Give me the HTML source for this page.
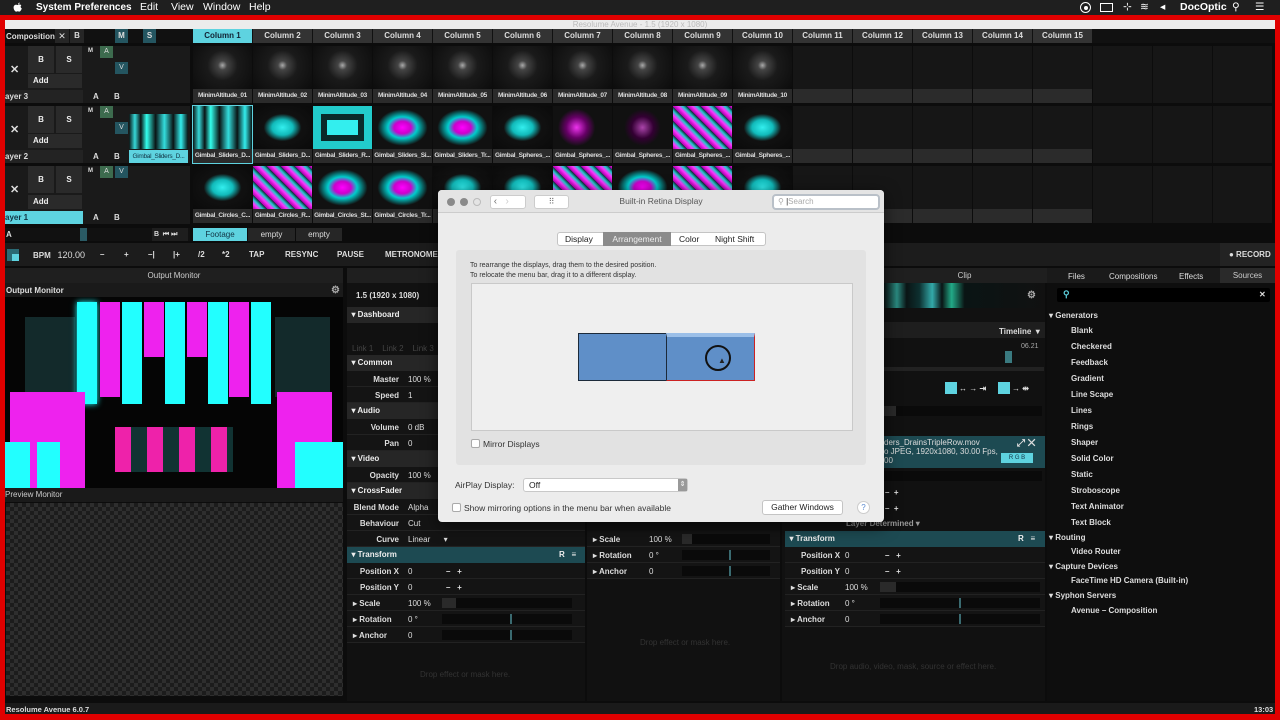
<!DOCTYPE html>
<html><head><meta charset="utf-8"><style>
*{margin:0;padding:0;box-sizing:border-box}
body{width:1280px;height:720px;overflow:hidden;background:#e00000;font-family:"Liberation Sans",sans-serif;position:relative}
.a{position:absolute}
.t{position:absolute;font-size:8px;color:#ddd;white-space:nowrap;font-weight:bold}
.cell{position:absolute;width:59px;height:57px;background:#161616}
.cell .im{position:absolute;left:0;top:0;width:59px;height:43px}
.cell .lb{position:absolute;left:0;top:43px;width:59px;height:14px;background:#2b2b2b;color:#ddd;font-size:6.5px;letter-spacing:-0.3px;line-height:14px;text-align:center;white-space:nowrap;overflow:hidden;font-weight:bold}
.col{position:absolute;top:29px;width:59px;height:14px;background:#333;color:#ddd;font-size:8px;line-height:14px;text-align:center;font-weight:bold}
.g{background:radial-gradient(circle at 50% 45%,#aaa 0,#444 12%,#1a1a1a 40%,#0c0c0c 100%)}
.c1{background:linear-gradient(90deg,#0a1414,#36d8d8 10%,#0a1414 20%,#3fe 30%,#0a1414 45%,#3dd 60%,#0a1414 75%,#3ee 88%,#0a1414)}
.c2{background:radial-gradient(ellipse at 50% 50%,#f0f 0,#c0c 20%,#0cc 35%,#111 60%)}
.c3{background:radial-gradient(ellipse at 50% 50%,#3ee 0,#1bb 25%,#111 45%,#0a0a0a)}
.c4{background:repeating-linear-gradient(45deg,#a0a 0,#f3f 4px,#2cc 7px,#123 10px)}
.pr{position:absolute;height:16px;background:#141414;border-bottom:1px solid #222}
.hd{position:absolute;height:16px;background:#262626;color:#eee;font-size:8px;font-weight:bold;line-height:16px}
</style></head><body>
<!-- menubar -->
<div class="a" style="left:0;top:0;width:1280px;height:15px;background:#1f1f1f;color:#fff;font-size:10.5px;line-height:15px" >
<svg class="a" style="left:13px;top:2px" width="10" height="11" viewBox="0 0 10 11"><path d="M5 3C6 2.2 7.5 2.3 8.4 3.3 7.3 4 7.4 5.8 8.8 6.4 8.3 7.9 7.4 9.6 6.4 9.6 5.7 9.6 5.5 9.2 4.8 9.2 4 9.2 3.8 9.6 3.1 9.6 2 9.6.5 7.3.6 5.2.7 3.5 2 2.6 3.1 2.7 3.9 2.7 4.4 3.1 5 3ZM5.1 2.5C5 1.6 5.7.6 6.6.5 6.7 1.4 6 2.5 5.1 2.5Z" fill="#fff"/></svg>
<span class="a" style="left:36px;font-weight:bold;font-size:10px">System Preferences</span>
<span class="a" style="left:140px">Edit</span><span class="a" style="left:171px">View</span><span class="a" style="left:203px">Window</span><span class="a" style="left:249px">Help</span>
<span class="a" style="left:1080px;top:2px;width:11px;height:11px;border:1.5px solid #fff;border-radius:50%"></span>
<span class="a" style="left:1084px;top:6px;width:4px;height:4px;background:#fff;border-radius:50%"></span>
<span class="a" style="left:1100px;top:3px;width:13px;height:9px;border:1.5px solid #fff"></span>
<span class="a" style="left:1123px">⊹</span><span class="a" style="left:1140px">≋</span><span class="a" style="left:1160px">◂</span>
<span class="a" style="left:1180px;font-weight:bold">DocOptic</span>
<span class="a" style="left:1232px">⚲</span><span class="a" style="left:1255px">☰</span>
</div>
<!-- app area -->
<div class="a" style="left:5px;top:20px;width:1270px;height:694px;background:#0c0c0c"></div>
<div class="a" style="left:5px;top:20px;width:1270px;height:9px;background:#ececec;color:#bbb;font-size:8px;line-height:9px;text-align:center">Resolume Avenue - 1.5 (1920 x 1080)</div>
<div class="a" style="left:5px;top:29px;width:1270px;height:14px;background:#111"></div>
<div class="t" style="left:6px;top:32px">Composition</div>
<div class="a" style="left:55px;top:29px;width:14px;height:14px;background:#262626;color:#ddd;font-size:9px;text-align:center;line-height:14px">✕</div>
<div class="a" style="left:70px;top:29px;width:14px;height:14px;background:#262626;color:#ddd;font-size:8px;text-align:center;line-height:14px;font-weight:bold">B</div>
<div class="a" style="left:115px;top:29px;width:13px;height:14px;background:#245560;color:#ddd;font-size:8px;text-align:center;line-height:14px;font-weight:bold">M</div>
<div class="a" style="left:143px;top:29px;width:13px;height:14px;background:#245560;color:#ddd;font-size:8px;text-align:center;line-height:14px;font-weight:bold">S</div>
<div class="col" style="left:193px;background:#5ed3e0;color:#123">Column 1</div>
<div class="col" style="left:253px">Column 2</div><div class="col" style="left:313px">Column 3</div><div class="col" style="left:373px">Column 4</div><div class="col" style="left:433px">Column 5</div><div class="col" style="left:493px">Column 6</div><div class="col" style="left:553px">Column 7</div><div class="col" style="left:613px">Column 8</div><div class="col" style="left:673px">Column 9</div><div class="col" style="left:733px">Column 10</div><div class="col" style="left:793px">Column 11</div><div class="col" style="left:853px">Column 12</div><div class="col" style="left:913px">Column 13</div><div class="col" style="left:973px">Column 14</div><div class="col" style="left:1033px">Column 15</div>

<!-- layer controls -->
<div class="a" style="left:5px;top:46px;width:185px;height:57px;background:#1a1a1a"></div>
<div class="a" style="left:5px;top:106px;width:185px;height:57px;background:#1a1a1a"></div>
<div class="a" style="left:5px;top:166px;width:185px;height:58px;background:#1a1a1a"></div>
<div class="t" style="left:10px;top:63px;font-size:11px">✕</div>
<div class="a" style="left:28px;top:46px;width:26px;height:27px;background:#2a2a2a;color:#eee;font-size:8px;text-align:center;line-height:27px;font-weight:bold">B</div>
<div class="a" style="left:56px;top:46px;width:26px;height:27px;background:#2a2a2a;color:#eee;font-size:8px;text-align:center;line-height:27px;font-weight:bold">S</div>
<div class="a" style="left:28px;top:74px;width:54px;height:14px;background:#2a2a2a;color:#eee;font-size:8px;line-height:14px;padding-left:5px;font-weight:bold">Add</div>
<div class="a" style="left:100px;top:46px;width:13px;height:12px;background:#3d6b4e;color:#ddd;font-size:7px;text-align:center;line-height:12px">A</div>
<div class="a" style="left:115px;top:62px;width:13px;height:12px;background:#245560;color:#ddd;font-size:7px;text-align:center;line-height:12px">V</div>
<div class="t" style="left:88px;top:48px;font-size:6px">M</div>
<div class="a" style="left:5px;top:90px;width:78px;height:13px;background:#232323;color:#ddd;font-size:8px;line-height:13px;font-weight:bold">ayer 3</div>
<div class="t" style="left:93px;top:92px">A</div><div class="t" style="left:114px;top:92px">B</div>
<div class="t" style="left:10px;top:123px;font-size:11px">✕</div>
<div class="a" style="left:28px;top:106px;width:26px;height:27px;background:#2a2a2a;color:#eee;font-size:8px;text-align:center;line-height:27px;font-weight:bold">B</div>
<div class="a" style="left:56px;top:106px;width:26px;height:27px;background:#2a2a2a;color:#eee;font-size:8px;text-align:center;line-height:27px;font-weight:bold">S</div>
<div class="a" style="left:28px;top:134px;width:54px;height:14px;background:#2a2a2a;color:#eee;font-size:8px;line-height:14px;padding-left:5px;font-weight:bold">Add</div>
<div class="a" style="left:100px;top:106px;width:13px;height:12px;background:#3d6b4e;color:#ddd;font-size:7px;text-align:center;line-height:12px">A</div>
<div class="a" style="left:115px;top:122px;width:13px;height:12px;background:#245560;color:#ddd;font-size:7px;text-align:center;line-height:12px">V</div>
<div class="t" style="left:88px;top:108px;font-size:6px">M</div>
<div class="a" style="left:5px;top:150px;width:78px;height:13px;background:#232323;color:#ddd;font-size:8px;line-height:13px;font-weight:bold">ayer 2</div>
<div class="t" style="left:93px;top:152px">A</div><div class="t" style="left:114px;top:152px">B</div>
<div class="a c1" style="left:129px;top:114px;width:59px;height:35px"></div>
<div class="a" style="left:129px;top:150px;width:59px;height:13px;background:#5ed3e0;color:#134;font-size:6.5px;letter-spacing:-0.3px;line-height:13px;text-align:center;white-space:nowrap;overflow:hidden">Gimbal_Sliders_D...</div>
<div class="t" style="left:10px;top:183px;font-size:11px">✕</div>
<div class="a" style="left:28px;top:166px;width:26px;height:27px;background:#2a2a2a;color:#eee;font-size:8px;text-align:center;line-height:27px;font-weight:bold">B</div>
<div class="a" style="left:56px;top:166px;width:26px;height:27px;background:#2a2a2a;color:#eee;font-size:8px;text-align:center;line-height:27px;font-weight:bold">S</div>
<div class="a" style="left:28px;top:195px;width:54px;height:14px;background:#2a2a2a;color:#eee;font-size:8px;line-height:14px;padding-left:5px;font-weight:bold">Add</div>
<div class="a" style="left:100px;top:166px;width:13px;height:12px;background:#3d6b4e;color:#ddd;font-size:7px;text-align:center;line-height:12px">A</div>
<div class="a" style="left:115px;top:166px;width:13px;height:12px;background:#245560;color:#ddd;font-size:7px;text-align:center;line-height:12px">V</div>
<div class="t" style="left:88px;top:168px;font-size:6px">M</div>
<div class="a" style="left:5px;top:211px;width:78px;height:13px;background:#5ed3e0;color:#134;font-size:8px;line-height:13px;font-weight:bold">ayer 1</div>
<div class="t" style="left:93px;top:213px">A</div><div class="t" style="left:114px;top:213px">B</div>

<!-- clips row 3 -->
<div class="cell" style="left:193px;top:46px"><div class="im g"></div><div class="lb">MinimAltitude_01</div></div>
<div class="cell" style="left:253px;top:46px"><div class="im g"></div><div class="lb">MinimAltitude_02</div></div>
<div class="cell" style="left:313px;top:46px"><div class="im g"></div><div class="lb">MinimAltitude_03</div></div>
<div class="cell" style="left:373px;top:46px"><div class="im g"></div><div class="lb">MinimAltitude_04</div></div>
<div class="cell" style="left:433px;top:46px"><div class="im g"></div><div class="lb">MinimAltitude_05</div></div>
<div class="cell" style="left:493px;top:46px"><div class="im g"></div><div class="lb">MinimAltitude_06</div></div>
<div class="cell" style="left:553px;top:46px"><div class="im g"></div><div class="lb">MinimAltitude_07</div></div>
<div class="cell" style="left:613px;top:46px"><div class="im g"></div><div class="lb">MinimAltitude_08</div></div>
<div class="cell" style="left:673px;top:46px"><div class="im g"></div><div class="lb">MinimAltitude_09</div></div>
<div class="cell" style="left:733px;top:46px"><div class="im g"></div><div class="lb">MinimAltitude_10</div></div>
<div class="cell" style="left:793px;top:46px"><div class="lb"></div></div><div class="cell" style="left:853px;top:46px"><div class="lb"></div></div><div class="cell" style="left:913px;top:46px"><div class="lb"></div></div><div class="cell" style="left:973px;top:46px"><div class="lb"></div></div><div class="cell" style="left:1033px;top:46px"><div class="lb"></div></div>
<div class="cell" style="left:1093px;top:46px"></div><div class="cell" style="left:1153px;top:46px"></div><div class="cell" style="left:1213px;top:46px"></div>
<!-- row 2 -->
<div class="cell" style="left:193px;top:106px;outline:1px solid #5ed3e0"><div class="im c1"></div><div class="lb">Gimbal_Sliders_D...</div></div>
<div class="cell" style="left:253px;top:106px"><div class="im c3"></div><div class="lb">Gimbal_Sliders_D...</div></div>
<div class="cell" style="left:313px;top:106px"><div class="im" style="background:#3ee;border:8px solid #2cc;box-shadow:inset 0 0 0 6px #0a2a2a"></div><div class="lb">Gimbal_Sliders_R...</div></div>
<div class="cell" style="left:373px;top:106px"><div class="im c2"></div><div class="lb">Gimbal_Sliders_Si...</div></div>
<div class="cell" style="left:433px;top:106px"><div class="im c2"></div><div class="lb">Gimbal_Sliders_Tr...</div></div>
<div class="cell" style="left:493px;top:106px"><div class="im c3"></div><div class="lb">Gimbal_Spheres_...</div></div>
<div class="cell" style="left:553px;top:106px"><div class="im" style="background:radial-gradient(circle at 40% 50%,#e3e 0,#606 25%,#111 45%)"></div><div class="lb">Gimbal_Spheres_...</div></div>
<div class="cell" style="left:613px;top:106px"><div class="im" style="background:radial-gradient(circle at 50% 50%,#a4a 0,#303 30%,#111 50%)"></div><div class="lb">Gimbal_Spheres_...</div></div>
<div class="cell" style="left:673px;top:106px"><div class="im c4"></div><div class="lb">Gimbal_Spheres_...</div></div>
<div class="cell" style="left:733px;top:106px"><div class="im c3"></div><div class="lb">Gimbal_Spheres_...</div></div>
<div class="cell" style="left:793px;top:106px"><div class="lb"></div></div><div class="cell" style="left:853px;top:106px"><div class="lb"></div></div><div class="cell" style="left:913px;top:106px"><div class="lb"></div></div><div class="cell" style="left:973px;top:106px"><div class="lb"></div></div><div class="cell" style="left:1033px;top:106px"><div class="lb"></div></div>
<div class="cell" style="left:1093px;top:106px"></div><div class="cell" style="left:1153px;top:106px"></div><div class="cell" style="left:1213px;top:106px"></div>
<!-- row 1 -->
<div class="cell" style="left:193px;top:166px"><div class="im c3"></div><div class="lb">Gimbal_Circles_C...</div></div>
<div class="cell" style="left:253px;top:166px"><div class="im c4"></div><div class="lb">Gimbal_Circles_R...</div></div>
<div class="cell" style="left:313px;top:166px"><div class="im c2"></div><div class="lb">Gimbal_Circles_St...</div></div>
<div class="cell" style="left:373px;top:166px"><div class="im c2"></div><div class="lb">Gimbal_Circles_Tr...</div></div>
<div class="cell" style="left:433px;top:166px"><div class="im c3"></div><div class="lb"></div></div>
<div class="cell" style="left:493px;top:166px"><div class="im c3"></div><div class="lb"></div></div>
<div class="cell" style="left:553px;top:166px"><div class="im c4"></div><div class="lb"></div></div>
<div class="cell" style="left:613px;top:166px"><div class="im c2"></div><div class="lb"></div></div>
<div class="cell" style="left:673px;top:166px"><div class="im c4"></div><div class="lb"></div></div>
<div class="cell" style="left:733px;top:166px"><div class="im c3"></div><div class="lb"></div></div>
<div class="cell" style="left:793px;top:166px"><div class="lb"></div></div><div class="cell" style="left:853px;top:166px"><div class="lb"></div></div><div class="cell" style="left:913px;top:166px"><div class="lb"></div></div><div class="cell" style="left:973px;top:166px"><div class="lb"></div></div><div class="cell" style="left:1033px;top:166px"><div class="lb"></div></div>
<div class="cell" style="left:1093px;top:166px"></div><div class="cell" style="left:1153px;top:166px"></div><div class="cell" style="left:1213px;top:166px"></div>

<!-- deck row -->
<div class="a" style="left:5px;top:228px;width:185px;height:13px;background:#111"></div>
<div class="t" style="left:6px;top:230px">A</div>
<div class="a" style="left:80px;top:228px;width:7px;height:13px;background:#2a5a64"></div>
<div class="a" style="left:152px;top:228px;width:36px;height:13px;background:#1e1e1e;color:#ddd;font-size:7px;line-height:13px;font-weight:bold">&nbsp;B &nbsp;⏮ ⏭</div>
<div class="a" style="left:193px;top:228px;width:54px;height:13px;background:#5ed3e0;color:#134;font-size:8px;text-align:center;line-height:13px">Footage</div>
<div class="a" style="left:248px;top:228px;width:47px;height:13px;background:#262626;color:#ddd;font-size:8px;text-align:center;line-height:13px">empty</div>
<div class="a" style="left:296px;top:228px;width:46px;height:13px;background:#262626;color:#ddd;font-size:8px;text-align:center;line-height:13px">empty</div>
<!-- bpm bar -->
<div class="a" style="left:5px;top:243px;width:1270px;height:23px;background:#1c1c1c"></div>
<div class="a" style="left:7px;top:249px;width:12px;height:12px;background:#2a6a74"></div><div class="a" style="left:12px;top:254px;width:7px;height:7px;background:#5ed3e0"></div>
<div class="t" style="left:33px;top:250px">BPM &nbsp;&nbsp;<span style="font-weight:normal;font-size:9px">120.00</span></div>
<div class="t" style="left:100px;top:250px">–</div><div class="t" style="left:124px;top:250px">+</div><div class="t" style="left:148px;top:250px">–|</div><div class="t" style="left:173px;top:250px">|+</div><div class="t" style="left:198px;top:250px">/2</div><div class="t" style="left:222px;top:250px">*2</div><div class="t" style="left:249px;top:250px">TAP</div><div class="t" style="left:285px;top:250px">RESYNC</div><div class="t" style="left:337px;top:250px">PAUSE</div><div class="t" style="left:385px;top:250px">METRONOME</div>
<div class="a" style="left:1220px;top:243px;width:55px;height:23px;background:#232323"></div>
<div class="t" style="left:1229px;top:250px">● RECORD</div>

<!-- panel headers -->
<div class="a" style="left:5px;top:268px;width:338px;height:15px;background:#1f1f1f;color:#ccc;font-size:8px;text-align:center;line-height:15px">Output Monitor</div>
<div class="a" style="left:347px;top:268px;width:700px;height:15px;background:#1f1f1f"></div>
<div class="a" style="left:884px;top:268px;width:161px;height:15px;background:#1f1f1f;color:#ccc;font-size:8px;text-align:center;line-height:15px">Clip</div>
<div class="a" style="left:1047px;top:268px;width:228px;height:15px;background:#1a1a1a"></div>
<div class="t" style="left:1068px;top:272px;font-weight:normal">Files</div><div class="t" style="left:1109px;top:272px;font-weight:normal">Compositions</div><div class="t" style="left:1179px;top:272px;font-weight:normal">Effects</div>
<div class="a" style="left:1220px;top:268px;width:55px;height:15px;background:#2a2a2a;color:#ccc;font-size:8px;line-height:15px;text-align:center">Sources</div>

<!-- output monitor -->
<div class="a" style="left:5px;top:283px;width:338px;height:14px;background:#1a1a1a"></div>
<div class="t" style="left:6px;top:286px">Output Monitor</div><div class="t" style="left:331px;top:285px;color:#aaa;font-size:10px">⚙</div>
<div class="a" style="left:5px;top:297px;width:338px;height:191px;background:#050505;overflow:hidden">
 <div class="a" style="left:20px;top:20px;width:50px;height:80px;background:#1a3a3c;opacity:.7"></div>
 <div class="a" style="left:270px;top:20px;width:55px;height:80px;background:#1a3a3c;opacity:.7"></div>
 <div class="a" style="left:72px;top:5px;width:20px;height:102px;background:#2ff;box-shadow:0 0 6px #2ff"></div>
 <div class="a" style="left:95px;top:5px;width:20px;height:95px;background:#e2e"></div>
 <div class="a" style="left:117px;top:5px;width:20px;height:102px;background:#2ff"></div>
 <div class="a" style="left:139px;top:5px;width:20px;height:55px;background:#e2e"></div>
 <div class="a" style="left:160px;top:5px;width:20px;height:102px;background:#2ff"></div>
 <div class="a" style="left:182px;top:5px;width:20px;height:55px;background:#e2e"></div>
 <div class="a" style="left:203px;top:5px;width:20px;height:102px;background:#2ff"></div>
 <div class="a" style="left:224px;top:5px;width:20px;height:95px;background:#e2e"></div>
 <div class="a" style="left:246px;top:5px;width:20px;height:102px;background:#2ff"></div>
 <div class="a" style="left:5px;top:95px;width:50px;height:100px;background:#e2e"></div>
 <div class="a" style="left:0;top:145px;width:25px;height:50px;background:#2ff"></div>
 <div class="a" style="left:32px;top:145px;width:28px;height:50px;background:#2ff"></div>
 <div class="a" style="left:55px;top:95px;width:25px;height:100px;background:#e2e"></div>
 <div class="a" style="left:272px;top:95px;width:55px;height:100px;background:#e2e"></div>
 <div class="a" style="left:290px;top:145px;width:48px;height:50px;background:#2ff"></div>
 <div class="a" style="left:110px;top:130px;width:118px;height:45px;background:repeating-linear-gradient(90deg,#e2a 0 16px,#133 16px 32px)"></div>
</div>
<div class="a" style="left:5px;top:488px;width:338px;height:14px;background:#1a1a1a;color:#ccc;font-size:8px;line-height:14px">Preview Monitor</div>
<div class="a" style="left:6px;top:503px;width:337px;height:193px;background-color:#1c1c1c;background-image:linear-gradient(45deg,#2e2e2e 25%,transparent 25%,transparent 75%,#2e2e2e 75%),linear-gradient(45deg,#2e2e2e 25%,transparent 25%,transparent 75%,#2e2e2e 75%);background-size:8px 8px;background-position:0 0,4px 4px"></div>
<div class="a" style="left:5px;top:703px;width:1270px;height:11px;background:#1a1a1a"></div>
<div class="t" style="left:6px;top:705px;font-size:7.5px">Resolume Avenue 6.0.7</div><div class="t" style="left:1254px;top:705px;font-size:7.5px">13:03</div>

<!-- middle panel -->
<div class="a" style="left:347px;top:283px;width:238px;height:418px;background:#111"></div>
<div class="t" style="left:356px;top:291px">1.5 (1920 x 1080)</div>
<div class="hd" style="left:347px;top:307px;width:238px">&nbsp;&nbsp;▾ Dashboard</div>
<div class="t" style="left:352px;top:344px;color:#444;font-weight:normal">Link 1 &nbsp;&nbsp;&nbsp;Link 2 &nbsp;&nbsp;&nbsp;Link 3</div>
<div class="hd" style="left:347px;top:355px;width:238px">&nbsp;&nbsp;▾ Common</div>
<div class="pr" style="left:347px;top:371px;width:238px"><span class="t" style="right:186px;top:4px">Master</span><span class="t" style="left:61px;top:4px;font-weight:normal">100 %</span></div>
<div class="pr" style="left:347px;top:387px;width:238px"><span class="t" style="right:186px;top:4px">Speed</span><span class="t" style="left:61px;top:4px;font-weight:normal">1</span></div>
<div class="hd" style="left:347px;top:403px;width:238px">&nbsp;&nbsp;▾ Audio</div>
<div class="pr" style="left:347px;top:419px;width:238px"><span class="t" style="right:186px;top:4px">Volume</span><span class="t" style="left:61px;top:4px;font-weight:normal">0 dB</span></div>
<div class="pr" style="left:347px;top:435px;width:238px"><span class="t" style="right:186px;top:4px">Pan</span><span class="t" style="left:61px;top:4px;font-weight:normal">0</span></div>
<div class="hd" style="left:347px;top:451px;width:238px">&nbsp;&nbsp;▾ Video</div>
<div class="pr" style="left:347px;top:467px;width:238px"><span class="t" style="right:186px;top:4px">Opacity</span><span class="t" style="left:61px;top:4px;font-weight:normal">100 %</span></div>
<div class="hd" style="left:347px;top:483px;width:238px">&nbsp;&nbsp;▾ CrossFader</div>
<div class="pr" style="left:347px;top:499px;width:238px"><span class="t" style="right:186px;top:4px">Blend Mode</span><span class="t" style="left:61px;top:4px;font-weight:normal">Alpha</span></div>
<div class="pr" style="left:347px;top:515px;width:238px"><span class="t" style="right:186px;top:4px">Behaviour</span><span class="t" style="left:61px;top:4px;font-weight:normal">Cut</span></div>
<div class="pr" style="left:347px;top:531px;width:238px"><span class="t" style="right:186px;top:4px">Curve</span><span class="t" style="left:61px;top:4px;font-weight:normal">Linear &nbsp;&nbsp;&nbsp;&nbsp;&nbsp;▾</span></div>
<div class="hd" style="left:347px;top:547px;width:238px;background:#1d4a52">&nbsp;&nbsp;▾ Transform<span class="a" style="left:212px">R &nbsp;&nbsp;≡</span></div>
<div class="pr" style="left:347px;top:563px;width:238px"><span class="t" style="right:186px;top:4px">Position X</span><span class="t" style="left:61px;top:4px;font-weight:normal">0</span><span class="t" style="left:99px;top:4px">–&nbsp;&nbsp; +</span></div>
<div class="pr" style="left:347px;top:579px;width:238px"><span class="t" style="right:186px;top:4px">Position Y</span><span class="t" style="left:61px;top:4px;font-weight:normal">0</span><span class="t" style="left:99px;top:4px">–&nbsp;&nbsp; +</span></div>
<div class="pr" style="left:347px;top:595px;width:238px"><span class="t" style="left:6px;top:4px">▸ Scale</span><span class="t" style="left:61px;top:4px;font-weight:normal">100 %</span><span class="a" style="left:95px;top:3px;width:130px;height:10px;background:#0a0a0a;border-left:14px solid #2a2a2a"></span></div>
<div class="pr" style="left:347px;top:611px;width:238px"><span class="t" style="left:6px;top:4px">▸ Rotation</span><span class="t" style="left:61px;top:4px;font-weight:normal">0 °</span><span class="a" style="left:95px;top:3px;width:130px;height:10px;background:#0a0a0a"></span><span class="a" style="left:163px;top:3px;width:2px;height:10px;background:#3a6a70"></span></div>
<div class="pr" style="left:347px;top:627px;width:238px"><span class="t" style="left:6px;top:4px">▸ Anchor</span><span class="t" style="left:61px;top:4px;font-weight:normal">0</span><span class="a" style="left:95px;top:3px;width:130px;height:10px;background:#0a0a0a"></span><span class="a" style="left:163px;top:3px;width:2px;height:10px;background:#3a6a70"></span></div>
<div class="t" style="left:420px;top:670px;color:#333;font-weight:normal">Drop effect or mask here.</div>

<!-- middle panel 2 -->
<div class="a" style="left:587px;top:283px;width:193px;height:418px;background:#111"></div>
<div class="pr" style="left:587px;top:531px;width:193px"><span class="t" style="left:6px;top:4px">▸ Scale</span><span class="t" style="left:62px;top:4px;font-weight:normal">100 %</span><span class="a" style="left:95px;top:3px;width:88px;height:10px;background:#0a0a0a;border-left:10px solid #2a2a2a"></span></div>
<div class="pr" style="left:587px;top:547px;width:193px"><span class="t" style="left:6px;top:4px">▸ Rotation</span><span class="t" style="left:62px;top:4px;font-weight:normal">0 °</span><span class="a" style="left:95px;top:3px;width:88px;height:10px;background:#0a0a0a"></span><span class="a" style="left:142px;top:3px;width:2px;height:10px;background:#3a6a70"></span></div>
<div class="pr" style="left:587px;top:563px;width:193px"><span class="t" style="left:6px;top:4px">▸ Anchor</span><span class="t" style="left:62px;top:4px;font-weight:normal">0</span><span class="a" style="left:95px;top:3px;width:88px;height:10px;background:#0a0a0a"></span><span class="a" style="left:142px;top:3px;width:2px;height:10px;background:#3a6a70"></span></div>
<div class="t" style="left:640px;top:638px;color:#333;font-weight:normal">Drop effect or mask here.</div>

<!-- clip panel -->
<div class="a" style="left:782px;top:283px;width:263px;height:418px;background:#111"></div>
<div class="a" style="left:884px;top:283px;width:161px;height:25px;background:linear-gradient(90deg,#0a1414,#2a8a80 8%,#0a1414 14%,#0d3030 22%,#3aa 30%,#0a1414 36%,#2a8 42%,#0a1414 50%,#111 100%)"></div>
<div class="t" style="left:1027px;top:290px;color:#aaa;font-size:10px">⚙</div>
<div class="a" style="left:884px;top:322px;width:161px;height:16px;background:#1e1e1e"></div>
<div class="t" style="left:999px;top:327px">Timeline &nbsp;▾</div>
<div class="t" style="left:1021px;top:343px;color:#aaa;font-weight:normal;font-size:7px">06.21</div>
<div class="a" style="left:1005px;top:351px;width:7px;height:12px;background:#3a7a80"></div>
<div class="a" style="left:884px;top:367px;width:160px;height:4px;background:#222"></div>
<div class="a" style="left:945px;top:382px;width:12px;height:12px;background:#5ed3e0"></div>
<div class="t" style="left:959px;top:384px">↔ → ⇥</div>
<div class="a" style="left:998px;top:382px;width:12px;height:12px;background:#5ed3e0"></div>
<div class="t" style="left:1012px;top:384px">→ ⇹</div>
<div class="a" style="left:884px;top:406px;width:158px;height:10px;background:#0a0a0a;border-left:12px solid #2a2a2a"></div>
<div class="a" style="left:884px;top:436px;width:161px;height:32px;background:#1d4a52"></div>
<div class="t" style="left:884px;top:438px;font-weight:normal">ders_DrainsTripleRow.mov<br>o JPEG, 1920x1080, 30.00 Fps,<br>00</div>
<div class="t" style="left:1017px;top:438px;font-size:10px">⤢ ✕</div>
<div class="a" style="left:1001px;top:453px;width:32px;height:10px;background:#5ed3e0;color:#134;font-size:6px;line-height:10px;text-align:center">R G B</div>
<div class="a" style="left:884px;top:471px;width:158px;height:10px;background:#0a0a0a"></div>
<div class="t" style="left:885px;top:488px">– &nbsp;+</div><div class="t" style="left:885px;top:504px">– &nbsp;+</div>
<div class="t" style="left:846px;top:519px;color:#999">Layer Determined ▾</div>
<div class="hd" style="left:785px;top:531px;width:260px;background:#1d4a52">&nbsp;&nbsp;▾ Transform<span class="a" style="left:233px">R &nbsp;&nbsp;≡</span></div>
<div class="pr" style="left:785px;top:547px;width:260px"><span class="t" style="left:16px;top:4px">Position X</span><span class="t" style="left:60px;top:4px;font-weight:normal">0</span><span class="t" style="left:100px;top:4px">–&nbsp;&nbsp; +</span></div>
<div class="pr" style="left:785px;top:563px;width:260px"><span class="t" style="left:16px;top:4px">Position Y</span><span class="t" style="left:60px;top:4px;font-weight:normal">0</span><span class="t" style="left:100px;top:4px">–&nbsp;&nbsp; +</span></div>
<div class="pr" style="left:785px;top:579px;width:260px"><span class="t" style="left:6px;top:4px">▸ Scale</span><span class="t" style="left:60px;top:4px;font-weight:normal">100 %</span><span class="a" style="left:95px;top:3px;width:160px;height:10px;background:#0a0a0a;border-left:16px solid #2a2a2a"></span></div>
<div class="pr" style="left:785px;top:595px;width:260px"><span class="t" style="left:6px;top:4px">▸ Rotation</span><span class="t" style="left:60px;top:4px;font-weight:normal">0 °</span><span class="a" style="left:95px;top:3px;width:160px;height:10px;background:#0a0a0a"></span><span class="a" style="left:174px;top:3px;width:2px;height:10px;background:#3a6a70"></span></div>
<div class="pr" style="left:785px;top:611px;width:260px"><span class="t" style="left:6px;top:4px">▸ Anchor</span><span class="t" style="left:60px;top:4px;font-weight:normal">0</span><span class="a" style="left:95px;top:3px;width:160px;height:10px;background:#0a0a0a"></span><span class="a" style="left:174px;top:3px;width:2px;height:10px;background:#3a6a70"></span></div>
<div class="t" style="left:830px;top:662px;color:#333;font-weight:normal">Drop audio, video, mask, source or effect here.</div>

<!-- sources panel -->
<div class="a" style="left:1047px;top:283px;width:228px;height:418px;background:#0e0e0e"></div>
<div class="a" style="left:1057px;top:288px;width:213px;height:14px;background:#000;border-radius:2px"></div>
<div class="t" style="left:1063px;top:289px;color:#5ed3e0;font-size:9px">⚲</div><div class="t" style="left:1259px;top:290px">✕</div>
<div class="t" style="left:1049px;top:311px">▾ Generators</div>
<div class="t" style="left:1071px;top:326px">Blank</div>
<div class="t" style="left:1071px;top:342px">Checkered</div>
<div class="t" style="left:1071px;top:358px">Feedback</div>
<div class="t" style="left:1071px;top:374px">Gradient</div>
<div class="t" style="left:1071px;top:390px">Line Scape</div>
<div class="t" style="left:1071px;top:406px">Lines</div>
<div class="t" style="left:1071px;top:422px">Rings</div>
<div class="t" style="left:1071px;top:438px">Shaper</div>
<div class="t" style="left:1071px;top:454px">Solid Color</div>
<div class="t" style="left:1071px;top:470px">Static</div>
<div class="t" style="left:1071px;top:486px">Stroboscope</div>
<div class="t" style="left:1071px;top:502px">Text Animator</div>
<div class="t" style="left:1071px;top:518px">Text Block</div>
<div class="t" style="left:1049px;top:533px">▾ Routing</div>
<div class="t" style="left:1071px;top:547px">Video Router</div>
<div class="t" style="left:1049px;top:562px">▾ Capture Devices</div>
<div class="t" style="left:1071px;top:576px">FaceTime HD Camera (Built-in)</div>
<div class="t" style="left:1049px;top:591px">▾ Syphon Servers</div>
<div class="t" style="left:1071px;top:606px">Avenue – Composition</div>

<!-- dialog -->
<div class="a" style="left:438px;top:190px;width:446px;height:332px;background:#ececec;border-radius:4px;box-shadow:0 4px 16px rgba(0,0,0,.6);overflow:hidden">
 <div class="a" style="left:0;top:0;width:446px;height:23px;background:#e4e4e4;border-bottom:1px solid #ccc"></div>
 <div class="a" style="left:9px;top:8px;width:8px;height:8px;border-radius:50%;background:#8a8a8a"></div>
 <div class="a" style="left:22px;top:8px;width:8px;height:8px;border-radius:50%;background:#8a8a8a"></div>
 <div class="a" style="left:35px;top:8px;width:8px;height:8px;border-radius:50%;border:1px solid #bbb"></div>
 <div class="a" style="left:52px;top:5px;width:36px;height:14px;background:#fff;border:1px solid #ccc;border-radius:3px;color:#777;font-size:10px;line-height:12px">&nbsp;‹ &nbsp; <span style="color:#ccc">›</span></div>
 <div class="a" style="left:96px;top:5px;width:35px;height:14px;background:#fff;border:1px solid #ccc;border-radius:3px;color:#777;font-size:8px;line-height:12px;text-align:center">⠿</div>
 <div class="a" style="left:0;top:6px;width:446px;text-align:center;color:#555;font-size:8.5px">Built-in Retina Display</div>
 <div class="a" style="left:334px;top:4px;width:108px;height:16px;background:#fff;border:2px solid #b9c0c8;border-radius:4px;color:#aaa;font-size:8px;line-height:12px;padding-left:4px">⚲ <span style="color:#222">|</span>Search</div>
 <div class="a" style="left:18px;top:60px;width:410px;height:215px;background:#e2e2e2;border-radius:3px"></div>
 <div class="a" style="left:119px;top:42px;width:209px;height:14px;background:#fff;border:1px solid #c4c4c4;border-radius:3px;font-size:8.5px;line-height:12px;color:#222">
  <span class="a" style="left:7px">Display</span>
  <span class="a" style="left:45px;top:-1px;width:68px;height:14px;background:#8b8b8b;color:#eee;text-align:center;line-height:14px">Arrangement</span>
  <span class="a" style="left:121px">Color</span><span class="a" style="left:157px">Night Shift</span>
 </div>
 <div class="a" style="left:32px;top:71px;font-size:7px;color:#333;line-height:9.5px">To rearrange the displays, drag them to the desired position.<br>To relocate the menu bar, drag it to a different display.</div>
 <div class="a" style="left:33px;top:93px;width:382px;height:148px;background:#efefef;border:1px solid #c9c9c9"></div>
 <div class="a" style="left:140px;top:143px;width:89px;height:48px;background:#5f8fc8;border:1px solid #1c2a3a"></div>
 <div class="a" style="left:228px;top:143px;width:89px;height:48px;background:#5f8fc8;border:1px solid #1c2a3a;border-right:1px solid #c22;border-bottom:1px solid #c22;border-top:4px solid #9bbfe8"></div>
 <div class="a" style="left:267px;top:155px;width:26px;height:26px;border:2px solid #111;border-radius:50%"></div>
 <div class="a" style="left:280px;top:166px;color:#222;font-size:8px">▲</div>
 <div class="a" style="left:33px;top:249px;width:9px;height:9px;background:#fff;border:1px solid #aaa;border-radius:2px"></div>
 <div class="a" style="left:45px;top:249px;font-size:8.5px;color:#333">Mirror Displays</div>
 <div class="a" style="left:17px;top:290px;font-size:8.5px;color:#333">AirPlay Display:</div>
 <div class="a" style="left:85px;top:288px;width:165px;height:14px;background:#fff;border:1px solid #c8c8c8;border-radius:3px;font-size:8.5px;line-height:12px;padding-left:5px;color:#222">Off<span class="a" style="right:0;top:0;width:9px;height:12px;background:#999;color:#fff;font-size:7px;text-align:center">⇕</span></div>
 <div class="a" style="left:14px;top:313px;width:9px;height:9px;background:#fff;border:1px solid #aaa;border-radius:2px"></div>
 <div class="a" style="left:26px;top:313px;font-size:8.5px;color:#333">Show mirroring options in the menu bar when available</div>
 <div class="a" style="left:324px;top:310px;width:81px;height:15px;background:#fff;border:1px solid #c4c4c4;border-radius:3px;font-size:8.5px;line-height:13px;text-align:center;color:#222">Gather Windows</div>
 <div class="a" style="left:419px;top:311px;width:13px;height:13px;background:#fff;border:1px solid #ccc;border-radius:50%;font-size:8px;text-align:center;line-height:11px;color:#5a8ad0">?</div>
</div>
</body></html>
